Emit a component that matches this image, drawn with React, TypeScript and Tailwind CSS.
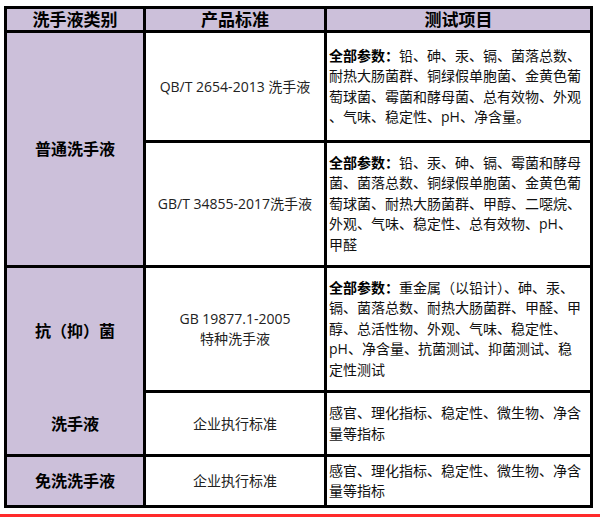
const font = { fontFamily: '"Open Sans", "Noto Sans CJK SC", sans-serif' }

type Line = { bold?: string; text: string }

function Items({ lines }: { lines: Line[] }) {
  return (
    <div className="bg-white flex flex-col justify-center pl-[2px] text-[14px] leading-[20.5px] text-[#111]">
      {lines.map((l, i) => (
        <div key={i} className="whitespace-nowrap">
          {l.bold && <span className="font-bold text-black">{l.bold}</span>}
          {l.text}
        </div>
      ))}
    </div>
  )
}

function Std({ children }: { children: React.ReactNode }) {
  return (
    <div className="bg-white flex flex-col items-center justify-center text-center text-[14px] leading-[20px] text-[#222]">
      {children}
    </div>
  )
}

export default function App() {
  return (
    <div className="w-[600px] h-[517px] bg-white overflow-hidden" style={font}>
      <div className="ml-[4px] mt-[6px] w-[589px] bg-black p-[3px] grid gap-[3px] grid-cols-[136px_178px_263px] grid-rows-[21px_107px_122px_122px_61px_48px]">
        {/* Header */}
        <div className="bg-[#ccc0da] flex items-center justify-center text-[17px] font-bold text-black leading-none">洗手液类别</div>
        <div className="bg-[#ccc0da] flex items-center justify-center text-[17px] font-bold text-black leading-none">产品标准</div>
        <div className="bg-[#ccc0da] flex items-center justify-center text-[17px] font-bold text-black leading-none">测试项目</div>

        {/* 普通洗手液 */}
        <div className="row-span-2 bg-[#ccc0da] flex items-center justify-center text-[16px] font-bold text-black">普通洗手液</div>
        <Std>QB/T 2654-2013 洗手液</Std>
        <Items
          lines={[
            { bold: '全部参数：', text: '铅、砷、汞、镉、菌落总数、' },
            { text: '耐热大肠菌群、铜绿假单胞菌、金黄色葡' },
            { text: '萄球菌、霉菌和酵母菌、总有效物、外观' },
            { text: '、气味、稳定性、pH、净含量。' },
          ]}
        />
        <Std>GB/T 34855-2017洗手液</Std>
        <Items
          lines={[
            { bold: '全部参数：', text: '铅、汞、砷、镉、霉菌和酵母' },
            { text: '菌、菌落总数、铜绿假单胞菌、金黄色葡' },
            { text: '萄球菌、耐热大肠菌群、甲醇、二噁烷、' },
            { text: '外观、气味、稳定性、总有效物、pH、' },
            { text: '甲醛' },
          ]}
        />

        {/* 抗（抑）菌 洗手液 */}
        <div className="row-span-2 bg-[#ccc0da] grid grid-rows-[125px_61px] text-[16px] font-bold text-black">
          <div className="flex items-center justify-center">抗（抑）菌</div>
          <div className="flex items-center justify-center">洗手液</div>
        </div>
        <Std>
          <div>GB 19877.1-2005</div>
          <div>特种洗手液</div>
        </Std>
        <Items
          lines={[
            { bold: '全部参数：', text: '重金属（以铅计）、砷、汞、' },
            { text: '镉、菌落总数、耐热大肠菌群、甲醛、甲' },
            { text: '醇、总活性物、外观、气味、稳定性、' },
            { text: 'pH、净含量、抗菌测试、抑菌测试、稳' },
            { text: '定性测试' },
          ]}
        />
        <Std>企业执行标准</Std>
        <Items lines={[{ text: '感官、理化指标、稳定性、微生物、净含' }, { text: '量等指标' }]} />

        {/* 免洗洗手液 */}
        <div className="bg-[#ccc0da] flex items-center justify-center text-[16px] font-bold text-black">免洗洗手液</div>
        <Std>企业执行标准</Std>
        <Items lines={[{ text: '感官、理化指标、稳定性、微生物、净含' }, { text: '量等指标' }]} />
      </div>
      <div className="mt-[6px] h-[3px] w-full bg-[#ff2a2a]" />
    </div>
  )
}
